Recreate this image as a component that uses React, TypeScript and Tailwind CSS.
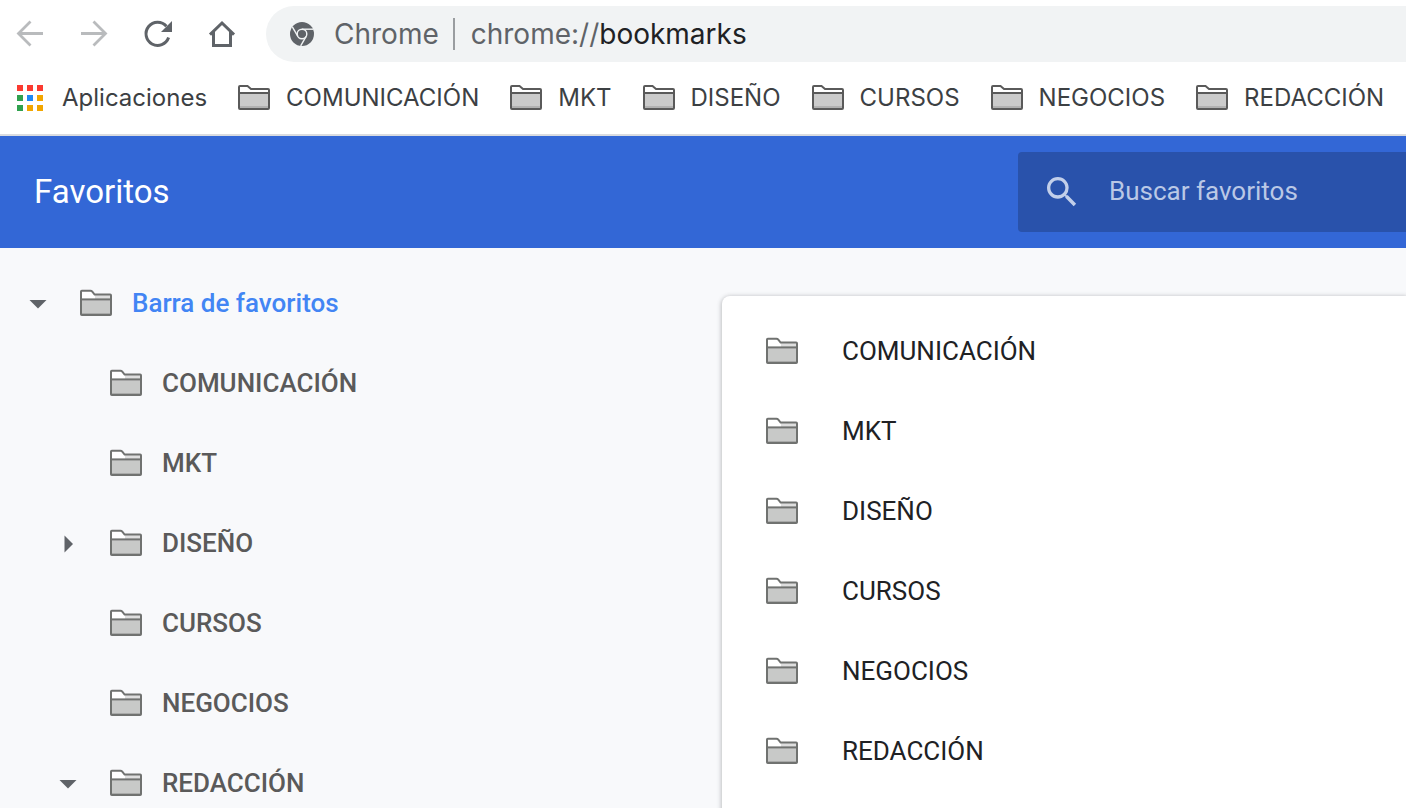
import { useState } from "react";

type TreeItem = {
  label: string;
  state?: "open" | "closed";
};

const FOLDERS = ["COMUNICACIÓN", "MKT", "DISEÑO", "CURSOS", "NEGOCIOS", "REDACCIÓN"];

const TREE: TreeItem[] = [
  { label: "COMUNICACIÓN" },
  { label: "MKT" },
  { label: "DISEÑO", state: "closed" },
  { label: "CURSOS" },
  { label: "NEGOCIOS" },
  { label: "REDACCIÓN", state: "open" },
];

const APP_DOTS = [
  "bg-[#fb3a30]",
  "bg-[#fb3a30]",
  "bg-[#fb3a30]",
  "bg-[#30a14e]",
  "bg-[#1e88f5]",
  "bg-[#f2a600]",
  "bg-[#30a14e]",
  "bg-[#f2a600]",
  "bg-[#f2a600]",
];

function BarFolderIcon() {
  return (
    <svg width="32" height="26" viewBox="0 0 32 26" className="shrink-0" aria-hidden="true">
      <path d="M1 2.5Q1 1 2.5 1H9.5L13 4H29.5Q31 4 31 5.5V8H1Z" fill="#fff" />
      <path d="M1 8H31V23.5H1Z" fill="#cbcbcb" />
      <path d="M1 21H31V23.5H1Z" fill="#b2b2b2" />
      <path
        d="M1 2Q1 1 2 1H9.5L13 4H30Q31 4 31 5V23Q31 24 30 24H2Q1 24 1 23ZM1 8H31"
        fill="none"
        stroke="#5a5a5a"
        strokeWidth="2"
      />
    </svg>
  );
}

function FolderIcon() {
  return (
    <svg width="32" height="28" viewBox="0 0 32 28" className="shrink-0" aria-hidden="true">
      <path d="M1 2H11L15 6H31V10H1Z" fill="#fff" />
      <path d="M15 6H31V10H15Z" fill="#dedede" />
      <path d="M1 10H31V26H1Z" fill="#c8c9c8" />
      <path
        d="M1 2.6Q1 1.8 1.8 1.8H10.5Q11.5 1.8 12.3 2.7L14.6 5.6H30.2Q31 5.6 31 6.4V25.2Q31 26 30.2 26H1.8Q1 26 1 25.2Z"
        fill="none"
        stroke="#707270"
        strokeWidth="2"
      />
      <path d="M1 10.4H31" stroke="#707270" strokeWidth="2" />
      <path d="M2 24.5H30" stroke="#a9aaa9" strokeWidth="1" />
    </svg>
  );
}

function Toolbar() {
  return (
    <div className="flex items-center py-[6px]">
      <div className="flex shrink-0 items-center gap-8 pl-[14px] text-[#5f6368]">
        <button type="button" aria-label="Atrás" className="size-8 text-[#b9bbbd]">
          <svg viewBox="0 0 32 32" fill="none" stroke="currentColor" strokeWidth="2.8">
            <path d="M29 15.5H4.5M16.5 3.5L4.5 15.5L16.5 27.5" />
          </svg>
        </button>
        <button type="button" aria-label="Adelante" className="size-8 text-[#b9bbbd]">
          <svg viewBox="0 0 32 32" fill="none" stroke="currentColor" strokeWidth="2.8">
            <path d="M3 15.5H27.5M15.5 3.5L27.5 15.5L15.5 27.5" />
          </svg>
        </button>
        <button type="button" aria-label="Recargar" className="size-8">
          <svg viewBox="0 0 32 32" fill="none">
            <path
              d="M26.6 19.6A11.6 11.6 0 1 1 24.4 8.2"
              stroke="currentColor"
              strokeWidth="3"
            />
            <path d="M30 3V14H19Z" fill="currentColor" />
          </svg>
        </button>
        <button type="button" aria-label="Página principal" className="size-8">
          <svg viewBox="0 0 32 32" fill="none" stroke="currentColor" strokeWidth="3">
            <path d="M4 16.6L16 5L28 16.6" />
            <path d="M7.5 14V27.5H24.5V14" />
          </svg>
        </button>
      </div>
      <div className="ml-7 flex h-14 min-w-0 flex-1 items-center rounded-l-full bg-[#f1f3f4] pl-6 text-[28px] leading-8 text-[#5f6368]">
        <svg width="24" height="24" viewBox="0 0 24 24" className="shrink-0" aria-hidden="true">
          <circle cx="12" cy="12" r="12" fill="#5f6368" />
          <g fill="none" stroke="#f1f3f4" strokeWidth="1.4">
            <circle cx="12" cy="12" r="4.8" />
            <path d="M12 7.2H23" />
            <path d="M12 7.2H23" transform="rotate(120 12 12)" />
            <path d="M12 7.2H23" transform="rotate(240 12 12)" />
          </g>
        </svg>
        <span className="ml-5">Chrome</span>
        <span className="mr-4 ml-[14px] h-8 w-[2px] bg-[#9a9da0]" />
        <span>
          chrome://<span className="text-[#202124]">bookmarks</span>
        </span>
      </div>
    </div>
  );
}

function BookmarksBar() {
  return (
    <nav className="flex h-[68px] items-center gap-[31px] overflow-hidden border-b-2 border-[#dadce0] pb-[6px] pl-[17px] text-2xl whitespace-nowrap text-[#3c4043]">
      <button type="button" className="flex shrink-0 items-center gap-[19px]">
        <span className="grid grid-cols-3 gap-1">
          {APP_DOTS.map((color, i) => (
            <span key={i} className={`size-[6px] ${color}`} />
          ))}
        </span>
        Aplicaciones
      </button>
      {FOLDERS.map((name) => (
        <button key={name} type="button" className="flex shrink-0 items-center gap-4">
          <BarFolderIcon />
          {name}
        </button>
      ))}
    </nav>
  );
}

function Header() {
  const [query, setQuery] = useState("");

  return (
    <header className="flex h-28 items-center justify-between bg-[#3367d6] pl-[34px]">
      <h1 className="text-[33px] leading-10 text-white">Favoritos</h1>
      <label className="flex h-20 w-[388px] items-center rounded-l-[4px] bg-[#2952ab] pl-6 text-[#c2cfea]">
        <svg width="40" height="40" viewBox="0 0 24 24" className="shrink-0" aria-hidden="true">
          <path
            fill="currentColor"
            d="M15.5 14h-.79l-.28-.27A6.471 6.471 0 0 0 16 9.5 6.5 6.5 0 1 0 9.5 16c1.61 0 3.09-.59 4.23-1.57l.27.28v.79l5 4.99L20.49 19l-4.99-5zm-6 0C7.01 14 5 11.99 5 9.5S7.01 5 9.5 5 14 7.01 14 9.5 11.99 14 9.5 14z"
          />
        </svg>
        <input
          type="text"
          value={query}
          onChange={(e) => setQuery(e.target.value)}
          placeholder="Buscar favoritos"
          aria-label="Buscar favoritos"
          className="ml-[27px] min-w-0 flex-1 pb-[2px] text-[26px] leading-8 text-white outline-none placeholder:text-[#bac8e6]"
        />
      </label>
    </header>
  );
}

function Arrow({ state }: { state?: "open" | "closed" }) {
  if (!state) return <span className="size-5 shrink-0" />;
  return (
    <button
      type="button"
      aria-label={state === "open" ? "Contraer" : "Expandir"}
      className="size-5 shrink-0 text-[#5f6368]"
    >
      <svg viewBox="0 0 20 20" fill="currentColor">
        {state === "open" ? <path d="M1.5 7H18.5L10 15.5Z" /> : <path d="M6.5 2.5V19.5L15 11Z" />}
      </svg>
    </button>
  );
}

function Sidebar() {
  return (
    <aside className="w-[722px] shrink-0 pt-[15px] text-[26px] leading-8 font-medium text-[#5a5a5a]">
      <div className="flex h-20 items-center pl-7">
        <Arrow state="open" />
        <span className="ml-8 flex items-center gap-5 text-[#4285f4]">
          <FolderIcon />
          Barra de favoritos
        </span>
      </div>
      <ul>
        {TREE.map((item) => (
          <li key={item.label} className="flex h-20 items-center pl-[58px]">
            <Arrow state={item.state} />
            <span className="ml-8 flex items-center gap-5">
              <FolderIcon />
              {item.label}
            </span>
          </li>
        ))}
      </ul>
    </aside>
  );
}

function FolderList() {
  return (
    <main className="min-w-0 flex-1 pt-12">
      <ul className="min-h-[560px] rounded-tl-[8px] bg-white pt-[15px] text-[26px] leading-8 text-[#202124] shadow-[0_1px_4px_1px_rgba(60,64,67,0.3)]">
        {FOLDERS.map((name) => (
          <li key={name} className="flex h-20 items-center gap-11 pl-11">
            <FolderIcon />
            {name}
          </li>
        ))}
      </ul>
    </main>
  );
}

export default function App() {
  return (
    <div className="flex h-screen flex-col overflow-hidden bg-white font-['Inter',sans-serif]">
      <Toolbar />
      <BookmarksBar />
      <div className="flex min-h-0 flex-1 flex-col font-['Roboto',sans-serif]">
        <Header />
        <div className="flex min-h-0 flex-1 overflow-hidden bg-[#f8f9fb]">
          <Sidebar />
          <FolderList />
        </div>
      </div>
    </div>
  );
}
